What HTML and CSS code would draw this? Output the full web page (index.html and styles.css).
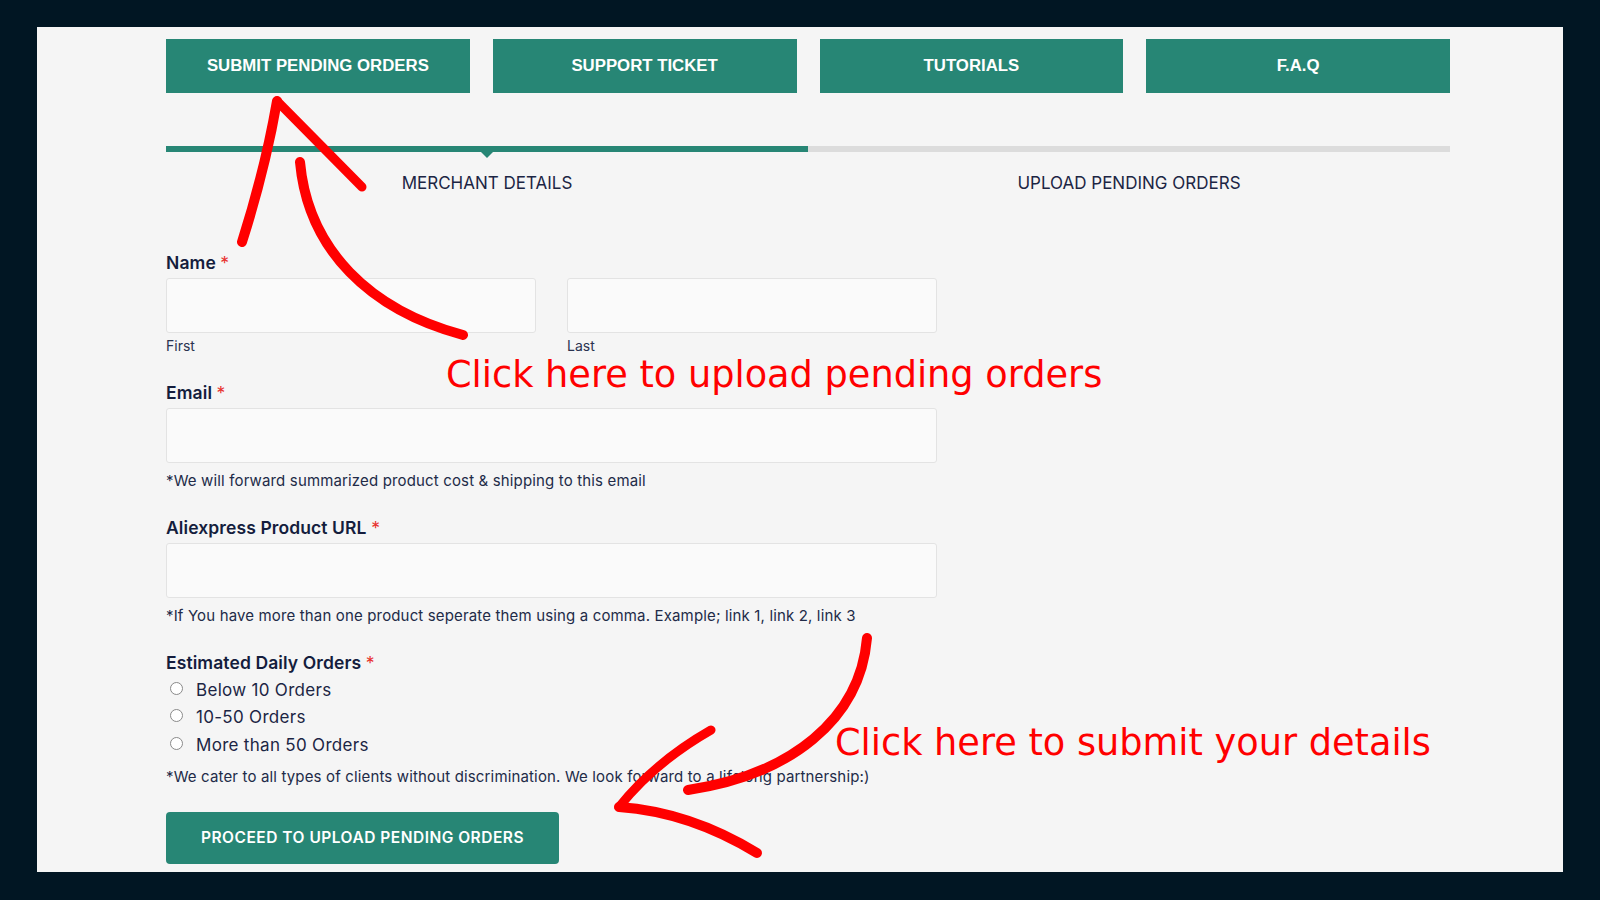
FILE: index.html
```html
<!DOCTYPE html>
<html lang="en">
<head>
    <meta charset="UTF-8">
    <meta name="viewport" content="width=device-width, initial-scale=1.0">
    <title>Submit Pending Orders</title>
    <link rel="stylesheet" href="styles.css">
</head>
<body>
    <div class="frame">
        <div class="panel">
            <nav class="tabs">
                <a class="tab" href="#">SUBMIT PENDING ORDERS</a>
                <a class="tab" href="#">SUPPORT TICKET</a>
                <a class="tab" href="#">TUTORIALS</a>
                <a class="tab" href="#">F.A.Q</a>
            </nav>

            <div class="steps">
                <div class="bar"><div class="bar_fill"></div></div>
                <div class="step_labels">
                    <span class="step">MERCHANT DETAILS</span>
                    <span class="step">UPLOAD PENDING ORDERS</span>
                </div>
            </div>

            <form class="form">
                <div class="field">
                    <label class="label">Name <span class="req">*</span></label>
                    <div class="name_row">
                        <div>
                            <input class="input" type="text">
                            <div class="sublabel">First</div>
                        </div>
                        <div>
                            <input class="input" type="text">
                            <div class="sublabel">Last</div>
                        </div>
                    </div>
                </div>

                <div class="field">
                    <label class="label">Email <span class="req">*</span></label>
                    <input class="input input_wide" type="email">
                    <div class="help">*We will forward summarized product cost &amp; shipping to this email</div>
                </div>

                <div class="field">
                    <label class="label">Aliexpress Product URL <span class="req">*</span></label>
                    <input class="input input_wide" type="text">
                    <div class="help">*If You have more than one product seperate them using a comma. Example; link 1, link 2, link 3</div>
                </div>

                <div class="field">
                    <label class="label">Estimated Daily Orders <span class="req">*</span></label>
                    <div class="choices">
                        <label class="choice"><input type="radio" name="orders"> Below 10 Orders</label>
                        <label class="choice"><input type="radio" name="orders"> 10-50 Orders</label>
                        <label class="choice"><input type="radio" name="orders"> More than 50 Orders</label>
                    </div>
                    <div class="help">*We cater to all types of clients without discrimination. We look forward to a lifelong partnership:)</div>
                </div>

                <button class="proceed" type="button">PROCEED TO UPLOAD PENDING ORDERS</button>
            </form>
        </div>

        <!-- hand drawn annotations on top of the screenshot -->
        <svg class="marks" width="1600" height="900" viewBox="0 0 1600 900">
            <g fill="none" stroke="#ff0000" stroke-linecap="round" stroke-linejoin="round">
                <path d="M277 101 Q265 170 242 242" stroke-width="10"/>
                <path d="M277 101 L362 187" stroke-width="9"/>
                <path d="M300 162 C308 250 370 310 463 335" stroke-width="10"/>
                <path d="M867 638 C860 720 790 775 688 790" stroke-width="10"/>
                <path d="M619 807 Q655 762 711 730" stroke-width="9"/>
                <path d="M619 807 Q690 812 757 853" stroke-width="10"/>
            </g>
        </svg>
        <p class="note note_top">Click here to upload pending orders</p>
        <p class="note note_bottom">Click here to submit your details</p>
    </div>
</body>
</html>
```

FILE: styles.css
```css
body {
    margin: 0;
    background-color: #011623;
    font-family: Inter, "Noto Sans", sans-serif;
    color: #141d3d;
}

.frame {
    position: relative;
    width: 1600px;
    height: 900px;
    overflow: hidden;
}

.panel {
    box-sizing: border-box;
    width: 1526px;
    height: 845px;
    margin: 27px 0 0 37px;
    padding: 12px 113px 0 129px;
    background-color: #f5f5f5;
}

.tabs {
    display: grid;
    grid-template-columns: repeat(4, 1fr);
    gap: 23px;
}

.tab {
    display: flex;
    align-items: center;
    justify-content: center;
    height: 54px;
    background-color: #278675;
    color: #ffffff;
    font-family: "Liberation Sans", Arial, sans-serif;
    font-size: 16.8px;
    font-weight: 700;
    text-decoration: none;
}

.steps {
    margin-top: 53px;
}

.bar {
    display: flex;
    height: 6px;
    background-color: #dcdcdc;
}

.bar_fill {
    position: relative;
    width: 50%;
    background-color: #278675;
}

.bar_fill::after {
    content: "";
    position: absolute;
    left: 50%;
    top: 100%;
    margin-left: -6px;
    border-left: 6px solid transparent;
    border-right: 6px solid transparent;
    border-top: 6px solid #278675;
}

.step_labels {
    display: grid;
    grid-template-columns: 1fr 1fr;
    margin-top: 19px;
}

.step {
    text-align: center;
    font-size: 17px;
    line-height: 24px;
    color: #1c2544;
}

.form {
    display: flex;
    flex-direction: column;
    align-items: flex-start;
    margin-top: 56px;
}

.field {
    display: flex;
    flex-direction: column;
    margin-bottom: 25px;
}

.field .label {
    font-size: 17.5px;
    font-weight: 600;
    line-height: 24px;
    margin-bottom: 3px;
    letter-spacing: 0.1px;
}

.req {
    color: #e8322f;
    font-weight: 400;
}

.name_row {
    display: grid;
    grid-template-columns: 370px 370px;
    gap: 31px;
}

.input {
    display: block;
    box-sizing: border-box;
    width: 370px;
    height: 55px;
    background-color: #fafafa;
    border: 1px solid #e3e3e3;
    border-radius: 3px;
    outline: none;
}

.input_wide {
    width: 771px;
}

.sublabel {
    margin-top: 3px;
    font-size: 14px;
    line-height: 20px;
    color: #2a3350;
}

.help {
    margin-top: 8px;
    font-size: 15px;
    line-height: 20px;
    letter-spacing: 0.15px;
    color: #222b48;
}

.choices {
    display: flex;
    flex-direction: column;
    margin-top: -2px;
}

.choice {
    display: flex;
    align-items: center;
    height: 27.5px;
    font-size: 17px;
    letter-spacing: 0.3px;
    color: #1c2544;
}

.choice input {
    appearance: none;
    -webkit-appearance: none;
    box-sizing: border-box;
    width: 13px;
    height: 13px;
    margin: -3px 13px 0 4px;
    border: 1px solid #8a8a8a;
    border-radius: 50%;
    background-color: #ffffff;
}

.proceed {
    width: 393px;
    height: 52px;
    border: 0;
    border-radius: 4px;
    background-color: #278675;
    color: #ffffff;
    font-family: Inter, "Noto Sans", sans-serif;
    font-size: 15.5px;
    font-weight: 600;
    letter-spacing: 0.5px;
    cursor: pointer;
}

.marks {
    position: absolute;
    left: 0;
    top: 0;
    pointer-events: none;
}

.note {
    position: absolute;
    margin: 0;
    font-family: "DejaVu Sans", Verdana, sans-serif;
    font-size: 36.7px;
    line-height: 1;
    color: #ff0000;
    white-space: nowrap;
}

.note_top {
    left: 446px;
    top: 357px;
}

.note_bottom {
    left: 835px;
    top: 725px;
}
```
